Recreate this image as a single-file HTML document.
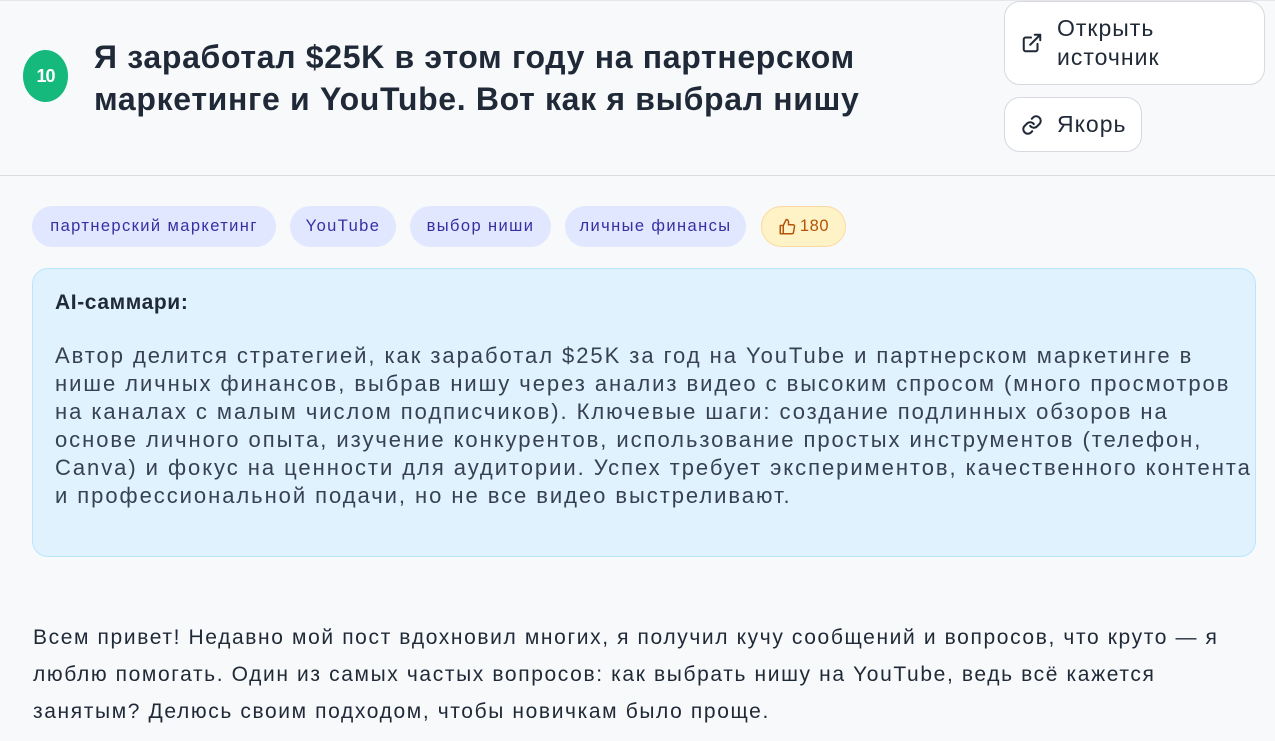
<!DOCTYPE html>
<html><head><meta charset="utf-8"><style>
*{box-sizing:border-box;margin:0;padding:0}
body{width:1275px;height:741px;overflow:hidden;background:#f8f9fb;font-family:"Liberation Sans",sans-serif;color:#1f2937;position:relative}
.header{position:absolute;left:0;top:0;width:1275px;height:176px;border-bottom:1px solid #d9dce1;border-top:1px solid #e5e7eb}
.num{position:absolute;left:23px;top:49px;width:45px;height:52px;border-radius:50%;background:#16b97c;color:#fff;font-weight:bold;font-size:18px;display:flex;align-items:center;justify-content:center;letter-spacing:-1px}
h1{position:absolute;left:94px;top:35px;font-size:32px;line-height:42px;font-weight:bold;color:#1f2937;letter-spacing:0.67px;white-space:nowrap}
.btn{position:absolute;background:#fff;border:1px solid #d6d9de;border-radius:16px;font-size:23px;color:#1f2937;display:flex;align-items:center;letter-spacing:1px}
.tag{position:absolute;top:206px;height:41px;border-radius:21px;background:#e0e7ff;color:#3730a3;font-size:16.5px;letter-spacing:1.4px;display:flex;align-items:center;justify-content:center;white-space:nowrap}
.like{background:#fef3c7;border:1px solid #fcd9a0;color:#b45309;letter-spacing:0.6px}
.sum{position:absolute;left:32px;top:268px;width:1224px;height:289px;background:#e0f2fe;border:1px solid #bae6fd;border-radius:16px;padding:20px 22px}
.sum b{display:block;font-size:21px;line-height:28px;margin-bottom:25px;letter-spacing:0.6px}
.sum p{font-size:22px;line-height:28px;color:#374151;letter-spacing:1.95px;white-space:nowrap}
.body{position:absolute;left:33px;top:619px;width:1230px;font-size:21px;line-height:37px;color:#1f2937;letter-spacing:1.62px;white-space:nowrap}
</style></head><body>
<div class="header">
<div class="num">10</div>
<h1>Я заработал $25K в этом году на партнерском<br>маркетинге и YouTube. Вот как я выбрал нишу</h1>
<div class="btn" style="left:1004px;top:0;width:261px;height:84px;padding-left:16px;line-height:29px">
<svg width="22" height="22" viewBox="0 0 24 24" fill="none" stroke="#1f2937" stroke-width="2.2" stroke-linecap="round" stroke-linejoin="round" style="margin-right:14px"><path d="M18 13v6a2 2 0 0 1-2 2H5a2 2 0 0 1-2-2V8a2 2 0 0 1 2-2h6M15 3h6v6M10 14L21 3"/></svg>
<span>Открыть<br>источник</span></div>
<div class="btn" style="left:1004px;top:96px;width:138px;height:55px;padding-left:16px">
<svg width="22" height="22" viewBox="0 0 24 24" fill="none" stroke="#1f2937" stroke-width="2.2" stroke-linecap="round" stroke-linejoin="round" style="margin-right:14px"><path d="M10 13a5 5 0 0 0 7.5.5l3-3a5 5 0 0 0-7-7l-1.7 1.7"/><path d="M14 11a5 5 0 0 0-7.5-.5l-3 3a5 5 0 0 0 7 7l1.7-1.7"/></svg>
<span>Якорь</span></div>
</div>
<div class="tag" style="left:32px;width:244px">партнерский маркетинг</div>
<div class="tag" style="left:290px;width:106px">YouTube</div>
<div class="tag" style="left:410px;width:141px">выбор ниши</div>
<div class="tag" style="left:565px;width:181px">личные финансы</div>
<div class="tag like" style="left:761px;width:85px"><svg width="18" height="18" viewBox="0 0 24 24" fill="none" stroke="#b45309" stroke-width="2" stroke-linejoin="round" style="margin-right:4px"><path d="M7 10v11H3V10h4zM7 10l4-8a3 3 0 0 1 3 3v4h6a2 2 0 0 1 2 2.3l-1.4 8A2 2 0 0 1 18.6 21H7"/></svg>180</div>
<div class="sum"><b>AI-саммари:</b>
<p>Автор делится стратегией, как заработал $25K за год на YouTube и партнерском маркетинге в<br>нише личных финансов, выбрав нишу через анализ видео с высоким спросом (много просмотров<br>на каналах с малым числом подписчиков). Ключевые шаги: создание подлинных обзоров на<br>основе личного опыта, изучение конкурентов, использование простых инструментов (телефон,<br>Canva) и фокус на ценности для аудитории. Успех требует экспериментов, качественного контента<br>и профессиональной подачи, но не все видео выстреливают.</p></div>
<div class="body">Всем привет! Недавно мой пост вдохновил многих, я получил кучу сообщений и вопросов, что круто — я<br>люблю помогать. Один из самых частых вопросов: как выбрать нишу на YouTube, ведь всё кажется<br>занятым? Делюсь своим подходом, чтобы новичкам было проще.</div>
</body></html>
